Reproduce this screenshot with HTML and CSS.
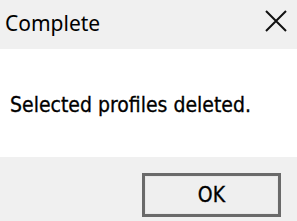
FILE: index.html
```html
<!DOCTYPE html>
<html lang="en">
<head>
	<meta charset="UTF-8">
	<title>Complete</title>
<link rel="stylesheet" href="styles.css">
</head>
<body>
	<div class="dialog">
		<div class="titlebar">
			<span class="title">Complete</span>
			<span class="close">
				<svg width="22" height="22" viewBox="0 0 22 22"><path d="M1 1L21 21M21 1L1 21" stroke="#111" stroke-width="2" fill="none"/></svg>
			</span>
		</div>
		<div class="content">
			<p class="msg">Selected profiles deleted.</p>
		</div>
		<div class="footer">
			<button class="btn">OK</button>
		</div>
	</div>
</body>
</html>
```

FILE: styles.css
```css
body,div,p,button{padding: 0;margin: 0;}
body{background: #f0f0f0;}
.dialog{
	width: 297px;
	height: 221px;
	display: flex;
	flex-direction: column;
	background: #f0f0f0;
}
.titlebar{
	height: 49px;
	display: flex;
	align-items: center;
	justify-content: space-between;
	padding: 0 10px 0 5px;
	box-sizing: border-box;
}
.title{
	font-family: "Noto Sans", sans-serif;
	font-size: 21px;
	color: #000;
	margin-top: -4px;
}
.close{
	display: flex;
	margin-top: -7px;
}
.content{
	height: 108px;
	background: #fff;
	display: flex;
	align-items: center;
	padding-left: 10px;
}
.msg{
	font-family: "DejaVu Sans Condensed", "DejaVu Sans", sans-serif;
	font-size: 21px;
	color: #000;
	margin-top: 4px;
	-webkit-text-stroke: 0.3px #000;
}
.footer{
	flex: 1;
	display: flex;
	justify-content: flex-end;
	align-items: flex-start;
	padding: 16px 16px 0 0;
}
.btn{
	width: 139px;
	height: 44px;
	border: 3px solid #6a6a6a;
	box-shadow: inset 0 0 0 1px #e8e8e8;
	background: #efefef;
	font-family: "DejaVu Sans Condensed", "DejaVu Sans", sans-serif;
	font-size: 21px;
	color: #000;
	-webkit-text-stroke: 0.3px #000;
}
```
